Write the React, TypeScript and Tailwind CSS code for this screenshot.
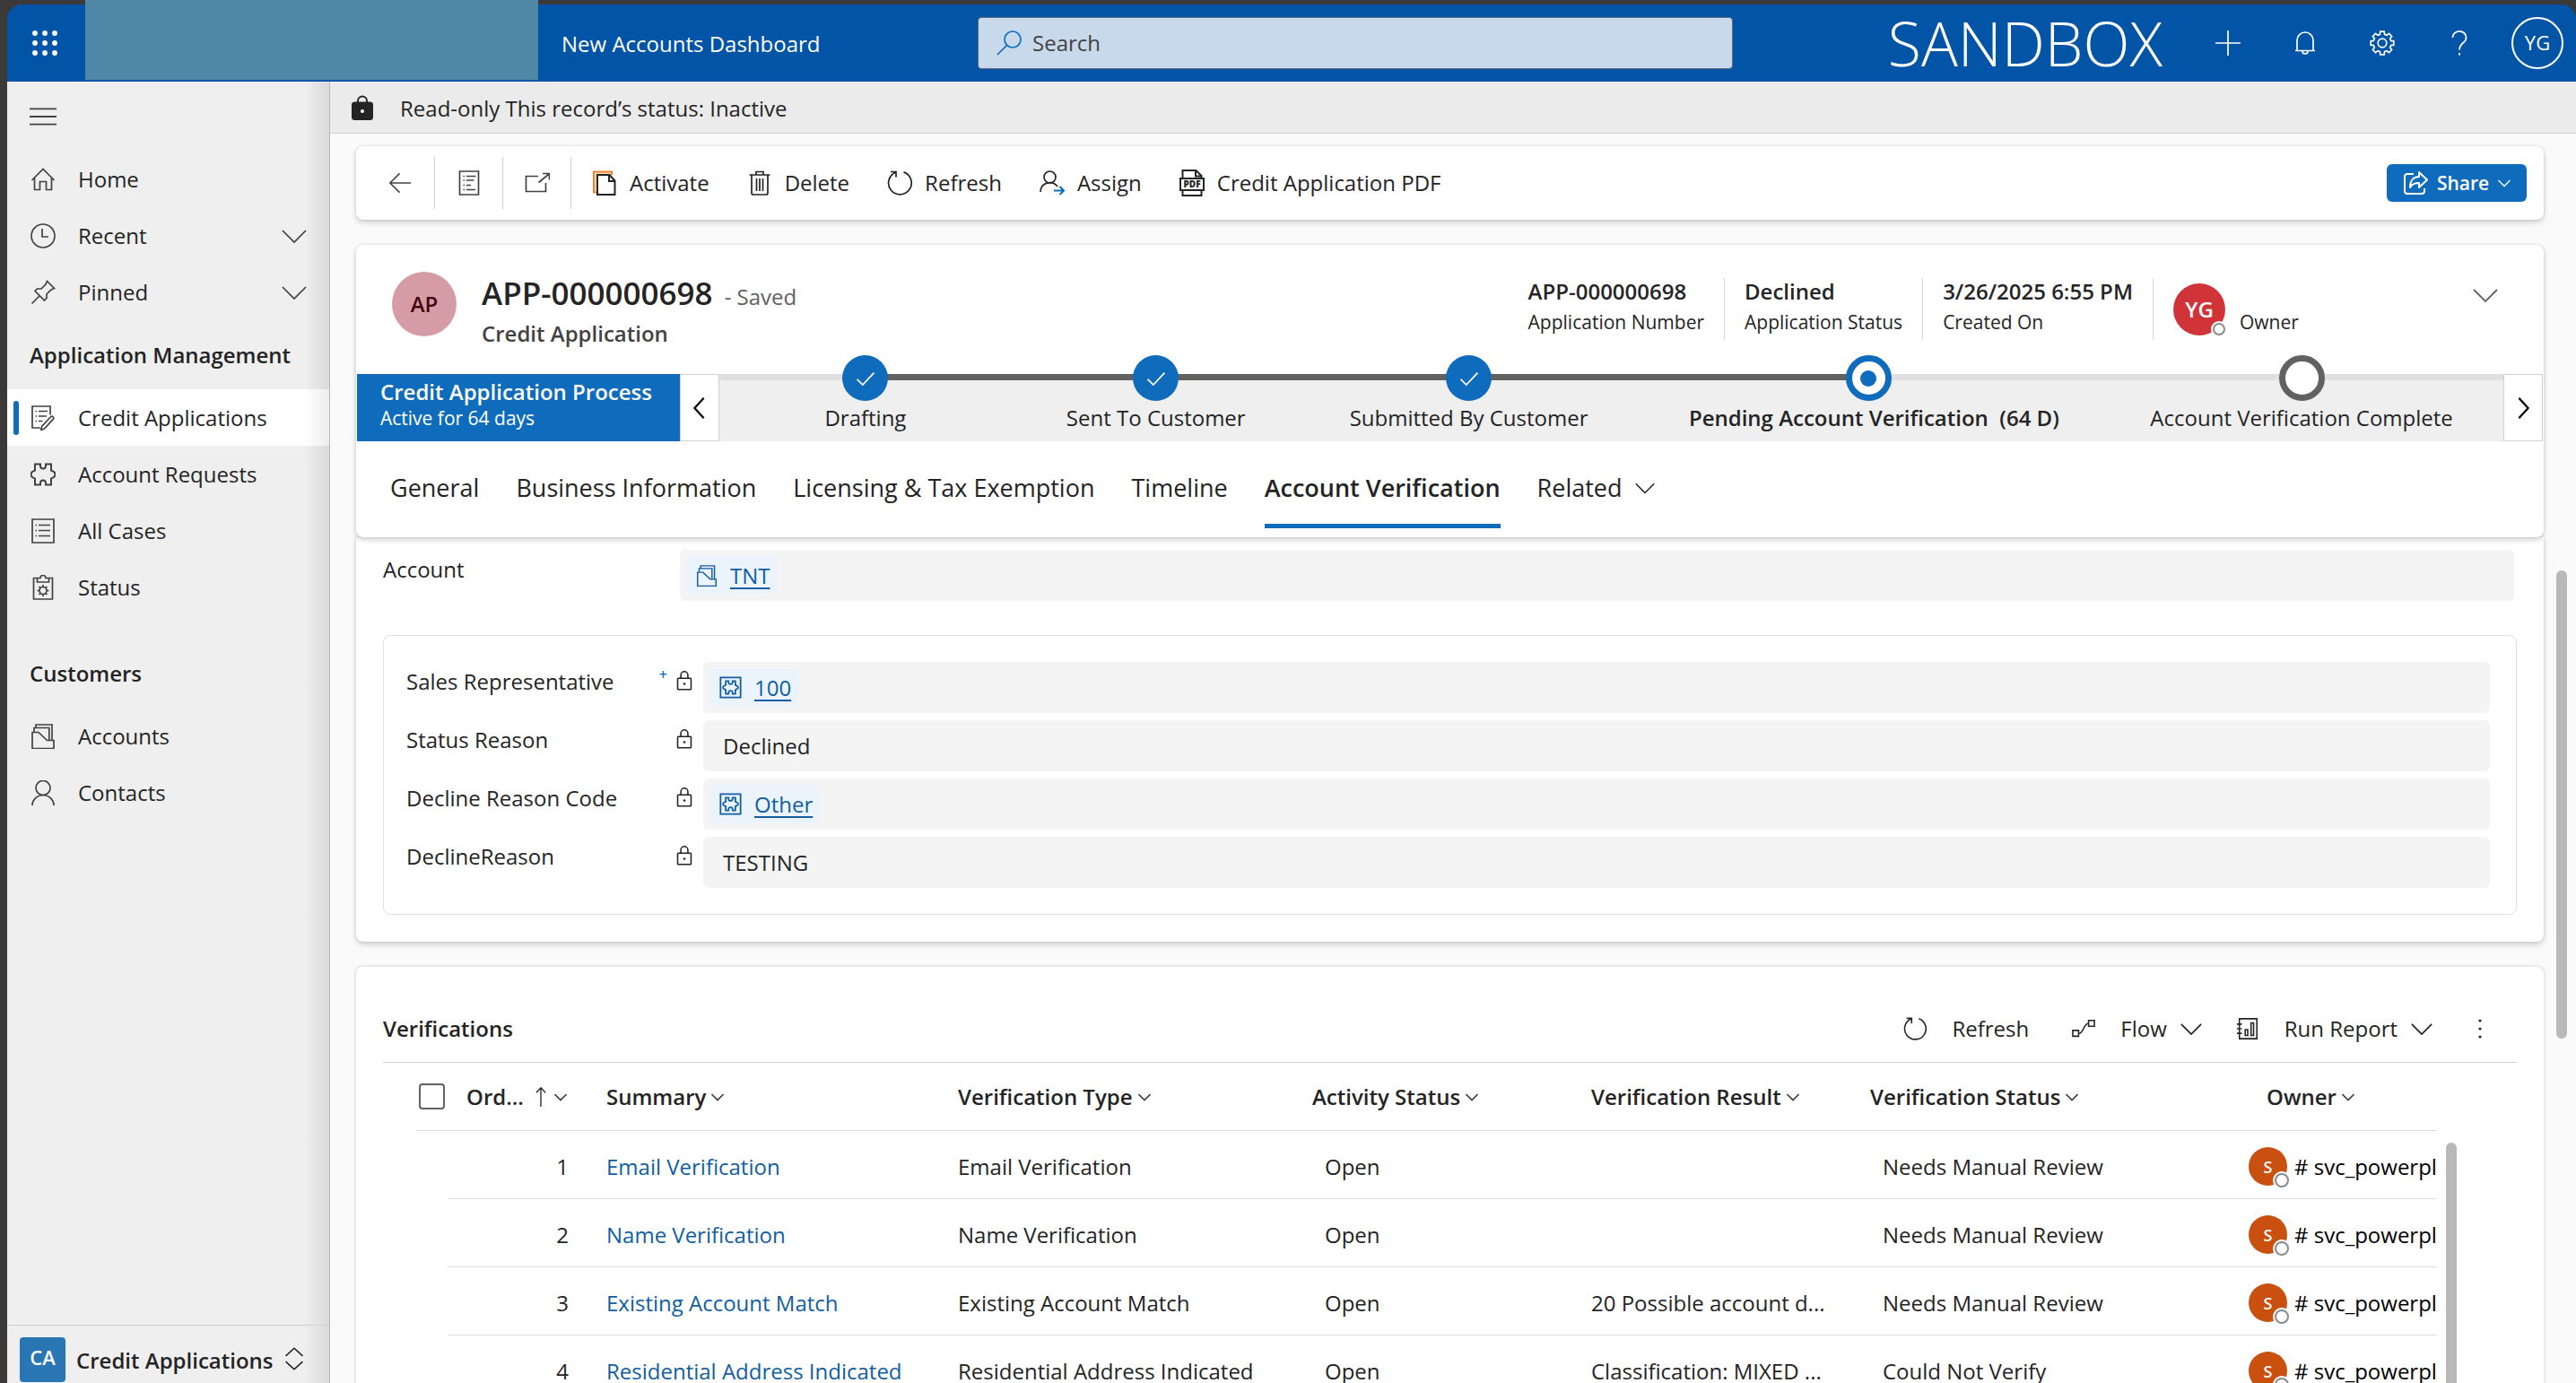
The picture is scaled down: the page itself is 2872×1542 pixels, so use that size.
import React, { useState } from 'react';
import { clsx } from 'clsx';

type IconProps = { className?: string };

function Svg({ className, children, stroke = 1.7 }: IconProps & { children: React.ReactNode; stroke?: number }) {
  return (
    <svg
      viewBox="0 0 28 28"
      fill="none"
      stroke="currentColor"
      strokeWidth={stroke}
      className={clsx('shrink-0', className ?? 'w-7 h-7')}
      aria-hidden="true"
    >
      {children}
    </svg>
  );
}

// outline of a cog with eight teeth
const gearPath = (cx: number, cy: number, outer: number, inner: number) => {
  const pts: string[] = [];
  for (let i = 0; i < 8; i++) {
    const a = (i * Math.PI) / 4;
    [
      [-0.26, inner],
      [-0.17, outer],
      [0.17, outer],
      [0.26, inner],
    ].forEach(([d, r]) => {
      pts.push(`${(cx + Math.sin(a + d) * r).toFixed(2)} ${(cy - Math.cos(a + d) * r).toFixed(2)}`);
    });
  }
  return `M${pts.join('L')}Z`;
};

const PUZZLE =
  'M5 2.5h6v2a3 3 0 0 0 6 0v-2h6v7c1 1 4.5.5 4.5 4.5s-3.5 3.5-4.5 4.5v7h-6v-2a3 3 0 0 0-6 0v2H5v-7c-1-1-4.5-.5-4.5-4.5S4 10.5 5 9.5z';

const HomeIcon = () => (
  <Svg>
    <path d="M1.5 15 14 2.5 26.5 15M4.5 12.5V25.5h6v-9h7v9h6v-13" />
  </Svg>
);
const ClockIcon = () => (
  <Svg>
    <circle cx="14" cy="14" r="13" />
    <path d="M13 6v9h7" />
  </Svg>
);
const PinIcon = () => (
  <Svg>
    <path d="M18.5 1.5 26.5 9.5 23 11l-5 5v4.5l-2.5 2.5L5 12.5 7.5 10H12l5-5zM10 18 1.5 26.5" />
  </Svg>
);
const ApplicationIcon = () => (
  <Svg>
    <path d="M22 10.5V1H2v24h9M5.500 6.500H7M9 6.500h10M5.500 12H7M9 12h9M5.500 17.500H7M9 17.500h4.500" />
    <path d="M22.500 12.800a1.800 1.800 0 0 1 2.700 2.600L15.500 26l-3.800 1.500 1-4z" />
  </Svg>
);
const PuzzleIcon = () => (
  <Svg stroke={2}>
    <path d={PUZZLE} />
  </Svg>
);
const ListIcon = () => (
  <Svg>
    <path d="M2 1h24v26H2zM5.500 7.500H7M9 7.500h13M5.500 13.500H7M9 13.500h13M5.500 19.500H7M9 19.500h13" />
  </Svg>
);
const StatusIcon = () => (
  <Svg>
    <path d="M7.500 3.500H3.500v23.500h21V3.500h-4M7.500 3.500v4.500h13V3.500h-3.500a3 3 0 0 0-6 0z" />
    <circle cx="14" cy="17.500" r="4" />
    <path d="M14 11v2.500M14 21.500v2.500M7.500 17.500H10M18 17.500h2.500M9.500 13l1.800 1.800M16.700 20.200l1.800 1.800M18.500 13l-1.800 1.800M11.300 20.200 9.500 22" />
  </Svg>
);
const AccountsIcon = ({ className }: IconProps) => (
  <Svg className={className}>
    <path d="M2 9.500h7l9.500 9h7.500V27.500H2zM6 4.500V1h18v17.500M4 9.500v-5h16.800v14" />
  </Svg>
);
const ContactIcon = () => (
  <Svg>
    <circle cx="14" cy="8.500" r="8" />
    <path d="M2 28a12 11.500 0 0 1 24 0" />
  </Svg>
);
const RefreshIcon = ({ className }: IconProps) => (
  <Svg className={className}>
    <path d="M18.500 1.900A12.800 12.800 0 1 1 9.500 2.200M4 1.500h6v6" />
  </Svg>
);
const ChevronDown = ({ className, stroke = 2 }: IconProps & { stroke?: number }) => (
  <Svg className={className} stroke={stroke}>
    <path d="M1 8l13 13L27 8" />
  </Svg>
);
const ChevronLeft = ({ className }: IconProps) => (
  <Svg className={className} stroke={2.4}>
    <path d="M19 2 8 14l11 12" />
  </Svg>
);
const LockIcon = () => (
  <Svg className="w-[22px] h-[22px]" stroke={2}>
    <rect x="4.500" y="10.500" width="19" height="16" rx="1" />
    <path d="M9 10.500V6a5 5 0 0 1 10 0v4.500" />
    <circle cx="14" cy="18.500" r="1.700" fill="currentColor" stroke="none" />
  </Svg>
);
const EntityIcon = () => (
  <Svg className="w-[25px] h-[25px]" stroke={2}>
    <path d="M1.500 1.500h25v25h-25z" />
    <path d="M8 6h3.500v1.500a2.500 2.500 0 0 0 5 0V6H20v5c1 .8 3.500.5 3.500 3s-2.500 2.200-3.500 3v5h-3.500v-1.500a2.500 2.500 0 0 0-5 0V22H8v-5c-1-.8-3.500-.5-3.500-3S7 11.800 8 11z" />
  </Svg>
);

const coreLinks = [
  { label: 'Home', icon: <HomeIcon /> },
  { label: 'Recent', icon: <ClockIcon />, expandable: true },
  { label: 'Pinned', icon: <PinIcon />, expandable: true },
];

const managementLinks = [
  { label: 'Credit Applications', icon: <ApplicationIcon /> },
  { label: 'Account Requests', icon: <PuzzleIcon /> },
  { label: 'All Cases', icon: <ListIcon /> },
  { label: 'Status', icon: <StatusIcon /> },
];

const customerLinks = [
  { label: 'Accounts', icon: <AccountsIcon /> },
  { label: 'Contacts', icon: <ContactIcon /> },
];

const stages = [
  { name: 'Drafting', state: 'done' },
  { name: 'Sent To Customer', state: 'done' },
  { name: 'Submitted By Customer', state: 'done' },
  { name: 'Pending Account Verification', state: 'active', age: '(64 D)' },
  { name: 'Account Verification Complete', state: 'todo' },
];

const tabs = ['General', 'Business Information', 'Licensing & Tax Exemption', 'Timeline', 'Account Verification'];

const columns = ['Summary', 'Verification Type', 'Activity Status', 'Verification Result', 'Verification Status', 'Owner'];

const verifications = [
  { order: 1, name: 'Email Verification', result: '', status: 'Needs Manual Review' },
  { order: 2, name: 'Name Verification', result: '', status: 'Needs Manual Review' },
  { order: 3, name: 'Existing Account Match', result: '20 Possible account d...', status: 'Needs Manual Review' },
  { order: 4, name: 'Residential Address Indicated', result: 'Classification: MIXED ...', status: 'Could Not Verify' },
];

function NavItem({ label, icon, expandable, selected }: { label: string; icon: React.ReactNode; expandable?: boolean; selected?: boolean }) {
  return (
    <a
      href="#"
      className={clsx(
        'relative flex h-[63px] items-center pl-[26px] pr-[25px] text-[#242424]',
        selected && 'bg-[linear-gradient(to_left,#ededed,#ffffff_28px)]'
      )}
      aria-current={selected ? 'page' : undefined}
    >
      {selected && <span className="absolute left-[7px] h-[38px] w-1.5 rounded-full bg-[#0f6cbd]" />}
      <span className="text-[#424242]">{icon}</span>
      <span className="ml-[25px] flex-1">{label}</span>
      {expandable && <ChevronDown className="h-7 w-7 text-[#424242]" stroke={1.7} />}
    </a>
  );
}

function Sidebar() {
  return (
    <nav className="flex w-[360px] shrink-0 flex-col border-r border-[#b8b8b8] bg-[linear-gradient(to_left,#dadada,#efefef_28px)]">
      <button aria-label="Site map" className="flex h-[77px] items-center pl-[25px] text-[#424242]">
        <Svg className="h-[30px] w-[30px]">
          <path d="M0 6h28M0 14h28M0 22h28" />
        </Svg>
      </button>
      {coreLinks.map((l) => (
        <NavItem key={l.label} {...l} />
      ))}
      <h2 className="flex h-[77px] items-center pl-[25px] font-semibold text-[#242424]">Application Management</h2>
      {managementLinks.map((l, i) => (
        <NavItem key={l.label} {...l} selected={i === 0} />
      ))}
      <h2 className="mt-[26px] flex h-[77px] items-center pl-[25px] font-semibold text-[#242424]">Customers</h2>
      {customerLinks.map((l) => (
        <NavItem key={l.label} {...l} />
      ))}
      <button className="mt-auto flex h-[65px] items-start border-t border-[#cfcfcf] pl-3.5 pt-[13px] text-left font-semibold text-[#242424]">
        <span className="flex h-[50px] w-[51px] items-center justify-center rounded bg-[#2a75b3] pb-1 text-[22px] text-white">CA</span>
        <span className="ml-3 pt-2.5">Credit Applications</span>
        <Svg className="ml-3 mt-2.5 h-7 w-[22px]" stroke={2}>
          <path d="M2 10 14-1l12 11M2 18l12 11 12-11" />
        </Svg>
      </button>
    </nav>
  );
}

function TopBar() {
  return (
    <header className="flex h-[86px] shrink-0 items-center rounded-t-2xl bg-[#0154a6] text-white">
      <button aria-label="App launcher" className="flex w-[87px] justify-center pr-1">
        <svg viewBox="0 0 28 28" className="h-7 w-7" fill="currentColor" aria-hidden="true">
          {[3, 14, 25].map((y) => [3, 14, 25].map((x) => <circle key={`${x}-${y}`} cx={x} cy={y} r="2.900" />))}
        </svg>
      </button>
      <div className="-mt-[7px] h-[91px] w-[505px] self-start bg-[#4f87a6]" />
      <span className="ml-[26px] w-[464px] pt-0.5">New Accounts Dashboard</span>
      <label className="flex h-[58px] w-[842px] items-center rounded border border-[#5f6a75] bg-[#c8d9eb] pl-5 text-[#0f6cbd]">
        <Svg>
          <circle cx="18" cy="10" r="9" />
          <path d="M11.500 16.500 1 27" />
        </Svg>
        <input
          type="text"
          aria-label="Search"
          placeholder="Search"
          className="ml-3 flex-1 bg-transparent text-[#424242] outline-none placeholder:text-[#424242]"
        />
      </label>
      <div className="ml-auto flex items-center pr-3.5">
        <span className="mr-[59px] text-[68px] font-light leading-[86px]">SANDBOX</span>
        <div className="flex items-center gap-[58px]">
          <button aria-label="New">
            <Svg>
              <path d="M14 0v28M0 14h28" />
            </Svg>
          </button>
          <button aria-label="Notifications">
            <Svg>
              <path d="M3 22.500h22M5 22.500V11a9 9 0 0 1 18 0v11.500M11 23a3 3 0 0 0 6 0" />
            </Svg>
          </button>
          <button aria-label="Settings">
            <Svg>
              <path d={gearPath(14, 14, 13, 10)} />
              <circle cx="14" cy="14" r="4.800" />
            </Svg>
          </button>
          <button aria-label="Help">
            <Svg>
              <path d="M6.500 8a7.500 7 0 1 1 12 5.500c-3 2.500-4.500 4-4.500 8" />
              <path d="M14 25v2.500" strokeWidth="2" />
            </Svg>
          </button>
          <button className="-ml-[14px] flex h-[58px] w-[58px] items-center justify-center rounded-full border-2 border-white text-[22px]">YG</button>
        </div>
      </div>
    </header>
  );
}

function CommandButton({ label, icon }: { label: string; icon: React.ReactNode }) {
  return (
    <button className="flex items-center gap-3.5 text-[#242424]">
      {icon}
      {label}
    </button>
  );
}

function CommandBar() {
  return (
    <div className="flex h-[82px] shrink-0 items-center rounded-lg bg-white pl-2.5 pr-[19px] shadow-[0_3px_6px_rgba(0,0,0,0.18),0_0_3px_rgba(0,0,0,0.12)]">
      <div className="flex items-center text-[#424242]">
        <button aria-label="Back" className="flex h-[58px] w-[78px] items-center justify-center border-r border-[#d1d1d1]">
          <Svg className="h-[26px] w-[26px]">
            <path d="M27 14H2M13.500 2.500 2 14l11.500 11.500" />
          </Svg>
        </button>
        <button aria-label="Show form" className="flex h-[58px] w-[76px] items-center justify-center border-r border-[#d1d1d1]">
          <Svg>
            <path d="M3.500 1h21v26h-21zM7.500 6.500H9M11 6.500h10.500M7.500 11H9M11 11h8.500M7.500 16.500H9M11 16.500h5M7.500 21.500H9M11 21.500h10" />
          </Svg>
        </button>
        <button aria-label="Open in new window" className="flex h-[58px] w-[76px] items-center justify-center border-r border-[#d1d1d1]">
          <Svg>
            <path d="M15 6.500H1.500v17h22V14M15.500 13.500 27 4M20 3.500h7.500v7" />
          </Svg>
        </button>
      </div>
      <div className="ml-[23px] flex items-center gap-[42px]">
        <CommandButton
          label="Activate"
          icon={
            <Svg stroke={2}>
              <path d="M5.500 24.500H2V1.500h20V5" stroke="#e8833a" fill="#f9d9a8" />
              <path d="M6 5h13.500l6 6.500V27H6z" fill="#fff" />
              <path d="M19 5v7h6.500" />
            </Svg>
          }
        />
        <CommandButton
          label="Delete"
          icon={
            <Svg>
              <path d="M2.500 5h23M10 5V1.500h8V5M5 5v20a2 2 0 0 0 2 2h14a2 2 0 0 0 2-2V5M10.500 9v14M14 9v14M17.500 9v14" />
            </Svg>
          }
        />
        <CommandButton label="Refresh" icon={<RefreshIcon />} />
        <CommandButton
          label="Assign"
          icon={
            <Svg>
              <circle cx="11.500" cy="7.500" r="6.500" />
              <path d="M1 24a10.500 10.500 0 0 1 19-6" />
              <path d="M16 22.500h11M22.500 18l4.500 4.500-4.500 4.500" stroke="#0f6cbd" strokeWidth="2" />
            </Svg>
          }
        />
        <CommandButton
          label="Credit Application PDF"
          icon={
            <svg viewBox="0 0 28 30" className="h-[30px] w-7 shrink-0" fill="none" stroke="#242424" strokeWidth="2" aria-hidden="true">
              <path d="M3.500 10V1h15l6 6v3M18 1v6.500h6.500M1 10h26v13H1zM3.500 23v6h21v-6" />
              <text x="14" y="20" textAnchor="middle" fontSize="10" fontWeight="800" fill="#242424" stroke="none">
                PDF
              </text>
            </svg>
          }
        />
      </div>
      <button className="ml-auto flex h-[42px] w-[156px] items-center justify-center rounded-md bg-[#0f6cbd] text-[21px] font-semibold text-white">
        <Svg stroke={2}>
          <path d="M12 4H5a3 3 0 0 0-3 3v16a3 3 0 0 0 3 3h16a3 3 0 0 0 3-3v-3" />
          <path d="M18 2l9 8.500-9 8.500v-5c-5 0-8 1.500-10 5 0-7 3.500-12 10-12z" strokeLinejoin="round" />
        </Svg>
        <span className="ml-2.5">Share</span>
        <ChevronDown className="ml-2.5 h-3.5 w-3.5" stroke={2.5} />
      </button>
    </div>
  );
}

function Presence({ className }: IconProps) {
  return <span className={clsx('absolute rounded-full border-2 border-[#8a8a8a] bg-white ring-2 ring-white', className)} />;
}

function Stat({ value, label }: { value: string; label: string }) {
  return (
    <div className="flex h-[69px] flex-col gap-1 border-r border-[#d6d6d6] px-[22px] text-[#242424]">
      <span className="font-semibold leading-[30px]">{value}</span>
      <span className="text-[21px] leading-[30px]">{label}</span>
    </div>
  );
}

function ProcessFlow() {
  return (
    <div className="flex h-[75px] px-px">
      <button className="w-[360px] shrink-0 bg-[#0f6cbd] pb-2 pl-[26px] text-left text-white">
        <span className="block font-semibold leading-[30px]">Credit Application Process</span>
        <span className="block text-[21px] leading-7">Active for 64 days</span>
      </button>
      <button aria-label="Previous stage" className="flex w-11 shrink-0 items-center justify-center border border-[#d1d1d1] bg-white">
        <ChevronLeft className="h-[26px] w-[26px]" />
      </button>
      <ol className="grid flex-1 grid-cols-[326fr_322fr_376fr_516fr_450fr] bg-[#efefef] text-[#242424]">
        {stages.map((s, i) => (
          <li key={s.name} className="flex flex-col items-center">
            <div className="flex h-[7px] w-full">
              <div className={clsx('flex-1', i > 0 && s.state !== 'todo' ? 'bg-[#616161]' : 'bg-[#e0e0e0]')} />
              <div className={clsx('flex-1', s.state === 'done' ? 'bg-[#616161]' : 'bg-[#e0e0e0]')} />
            </div>
            <button className="-mt-7 flex flex-col items-center whitespace-pre">
              {s.state === 'done' && (
                <span className="flex h-[51px] w-[51px] items-center justify-center rounded-full bg-[#0f6cbd] text-white">
                  <Svg className="h-[22px] w-[22px]" stroke={2.2}>
                    <path d="M2 15l8 8L26 6" />
                  </Svg>
                </span>
              )}
              {s.state === 'active' && (
                <span className="flex h-[51px] w-[51px] items-center justify-center rounded-full border-[7px] border-[#0f6cbd] bg-white">
                  <span className="h-[18px] w-[18px] rounded-full bg-[#0f6cbd]" />
                </span>
              )}
              {s.state === 'todo' && <span className="h-[51px] w-[51px] rounded-full border-[7px] border-[#616161] bg-white" />}
              <span className={clsx('leading-[38px]', s.state === 'active' && 'pl-3 font-semibold')}>
                {s.name}
                {s.age && `  ${s.age}`}
              </span>
            </button>
          </li>
        ))}
      </ol>
      <button aria-label="Next stage" className="flex w-11 shrink-0 items-center justify-center border border-[#d1d1d1] bg-white">
        <ChevronLeft className="h-[26px] w-[26px] rotate-180" />
      </button>
    </div>
  );
}

function RecordHeader() {
  const [active, setActive] = useState('Account Verification');
  return (
    <section className="relative shrink-0 rounded-lg bg-white shadow-[0_3px_6px_rgba(0,0,0,0.18),0_0_3px_rgba(0,0,0,0.12)]">
      <div className="flex h-36 items-start pt-[30px]">
        <span className="ml-10 flex h-[72px] w-[72px] items-center justify-center rounded-full bg-[#d69ca5] font-semibold text-[#420610]">AP</span>
        <div className="ml-7">
          <h1 className="text-[35px] font-semibold leading-[48px] text-[#242424]">
            APP-000000698 <span className="ml-1 text-2xl font-normal text-[#616161]">- Saved</span>
          </h1>
          <p className="font-semibold leading-[42px] text-[#424242]">Credit Application</p>
        </div>
        <div className="ml-auto flex items-center pt-[7px]">
          <Stat value="APP-000000698" label="Application Number" />
          <Stat value="Declined" label="Application Status" />
          <Stat value="3/26/2025 6:55 PM" label="Created On" />
          <span className="relative ml-[22px] flex h-[58px] w-[58px] items-center justify-center rounded-full bg-[#d13438] font-semibold text-white">
            YG
            <Presence className="bottom-0 right-0 h-3.5 w-3.5" />
          </span>
          <span className="ml-4 mt-7 w-[260px] text-[21px] text-[#242424]">Owner</span>
          <button aria-label="Expand header" className="mb-8 mr-[51px] text-[#616161]">
            <ChevronDown className="h-7 w-7" stroke={1.8} />
          </button>
        </div>
      </div>
      <ProcessFlow />
      <div role="tablist" className="flex h-[107px] items-start gap-[41px] pl-[38px] pt-6 text-[27px] text-[#242424]">
        {tabs.map((t) => (
          <button
            key={t}
            role="tab"
            aria-selected={active === t}
            onClick={() => setActive(t)}
            className={clsx('h-[73px] border-b-[5px] pb-3', active === t ? 'border-[#0f6cbd] font-semibold' : 'border-transparent')}
          >
            {t}
          </button>
        ))}
        <button className="flex h-[73px] items-center gap-3.5 pb-[17px]">
          Related
          <ChevronDown className="h-[22px] w-[22px]" />
        </button>
      </div>
    </section>
  );
}

function LookupField({ text, icon }: { text: string; icon: React.ReactNode }) {
  return (
    <div className="flex h-[57px] flex-1 items-center rounded-md bg-[#f4f4f4] pl-[7px]">
      <a href="#" className="flex h-[43px] items-center gap-3.5 rounded-md bg-[#ebf3fc] pl-[11px] pr-2 text-[#115ea3]">
        {icon}
        <span className="underline decoration-2 underline-offset-4">{text}</span>
      </a>
    </div>
  );
}

function FormRow({ id, label, recommended, children }: { id: string; label: string; recommended?: boolean; children: React.ReactNode }) {
  return (
    <div className="flex text-[#242424]">
      <div className="flex w-[331px] shrink-0 items-start pr-2.5">
        <label htmlFor={id} className="flex-1 pt-1.5 leading-8">
          {label}
        </label>
        {recommended && <span className="pr-2 pt-0.5 text-base font-semibold leading-6 text-[#0f6cbd]">+</span>}
        <span className="pt-2.5">
          <LockIcon />
        </span>
      </div>
      {children}
    </div>
  );
}

function FormBody() {
  return (
    <section className="shrink-0 rounded-b-lg bg-white px-[30px] pb-[30px] pt-3.5 shadow-[0_3px_6px_rgba(0,0,0,0.18),0_0_3px_rgba(0,0,0,0.12)]">
      <div className="flex pr-[3px] text-[#242424]">
        <span className="w-[331px] shrink-0 pt-1.5 leading-8">Account</span>
        <LookupField text="TNT" icon={<AccountsIcon className="h-6 w-6" />} />
      </div>
      <div className="mt-[38px] flex flex-col gap-2 rounded-lg border border-[#e0e0e0] py-[29px] pl-[25px] pr-[29px]">
        <FormRow id="rep" label="Sales Representative" recommended>
          <LookupField text="100" icon={<EntityIcon />} />
        </FormRow>
        <FormRow id="status" label="Status Reason">
          <input id="status" readOnly value="Declined" className="h-[57px] flex-1 rounded-md bg-[#f4f4f4] pl-[22px] outline-none" />
        </FormRow>
        <FormRow id="code" label="Decline Reason Code">
          <LookupField text="Other" icon={<EntityIcon />} />
        </FormRow>
        <FormRow id="reason" label="DeclineReason">
          <input id="reason" readOnly value="TESTING" className="h-[57px] flex-1 rounded-md bg-[#f4f4f4] pl-[22px] outline-none" />
        </FormRow>
      </div>
    </section>
  );
}

function VerificationsGrid() {
  return (
    <section className="mt-7 flex-1 rounded-t-lg bg-white px-[30px] text-[#242424] shadow-[0_0_4px_rgba(0,0,0,0.2)]">
      <div className="flex h-[107px] items-center border-b border-[#d1d1d1] pt-8">
        <h2 className="font-semibold">Verifications</h2>
        <div className="ml-auto flex items-center">
          <button className="flex items-center gap-7">
            <RefreshIcon className="h-[26px] w-[26px]" />
            Refresh
          </button>
          <button className="ml-12 flex items-center">
            <Svg className="h-[26px] w-[26px]">
              <path d="M1 16h7v7H1zM20 4h7v7h-7zM8 20c6 0 6-12.500 12-12.500" />
            </Svg>
            <span className="ml-7">Flow</span>
            <ChevronDown className="ml-[15px] h-6 w-6" />
          </button>
          <button className="ml-[38px] flex items-center">
            <Svg className="h-[26px] w-[26px]">
              <path d="M4 2h21v24H4zM1 8.500h6M1 14h6M1 19.500h6M11 15h3v7h-3zM18 7h3v15h-3z" />
            </Svg>
            <span className="ml-7">Run Report</span>
            <ChevronDown className="ml-[15px] h-6 w-6" />
          </button>
          <button aria-label="More commands" className="ml-[50px] mr-[38px]">
            <svg viewBox="0 0 6 24" className="h-6 w-1.5" fill="currentColor" aria-hidden="true">
              <circle cx="3" cy="3" r="1.600" />
              <circle cx="3" cy="12" r="1.600" />
              <circle cx="3" cy="21" r="1.600" />
            </svg>
          </button>
        </div>
      </div>
      <div className="flex pl-9 pr-[89px]">
        <table className="w-full table-fixed border-separate border-spacing-0 text-left">
          <colgroup>
            <col className="w-9" />
            <col className="w-[155px]" />
            <col className="w-[392px]" />
            <col className="w-[395px]" />
            <col className="w-[311px]" />
            <col className="w-[311px]" />
            <col className="w-[442px]" />
            <col />
          </colgroup>
          <thead>
            <tr className="h-[76px] [&>th]:border-b [&>th]:border-[#e0e0e0] [&>th]:p-0 [&>th]:font-semibold">
              <th>
                <input
                  type="checkbox"
                  aria-label="Select all rows"
                  className="ml-1 block h-[29px] w-[29px] appearance-none rounded border-2 border-[#616161] bg-white"
                />
              </th>
              <th>
                <button className="flex items-center pl-[21px]">
                  Ord...
                  <Svg className="ml-2 h-[22px] w-[22px]">
                    <path d="M14 28V1M7.500 8 14 1l6.500 7" />
                  </Svg>
                  <ChevronDown className="ml-1 h-3.5 w-3.5 text-[#424242]" stroke={3.5} />
                </button>
              </th>
              {columns.map((c) => (
                <th key={c}>
                  <button className="flex items-center gap-1.5 pl-[22px]">
                    {c}
                    <ChevronDown className="h-3.5 w-3.5 text-[#424242]" stroke={3.5} />
                  </button>
                </th>
              ))}
            </tr>
          </thead>
          <tbody>
            {verifications.map((v) => (
              <tr
                key={v.order}
                className="h-[76px] whitespace-nowrap [&>td]:border-b [&>td]:border-[#e0e0e0] [&>td]:p-0 [&>td]:pl-[22px] [&>td]:pt-1 [&>td:first-child]:border-0"
              >
                <td />
                <td>
                  <span className="block pr-5 text-right">{v.order}</span>
                </td>
                <td>
                  <a href="#" className="text-[#115ea3]">
                    {v.name}
                  </a>
                </td>
                <td>{v.name}</td>
                <td>
                  <span className="pl-3.5">Open</span>
                </td>
                <td>{v.result}</td>
                <td>
                  <span className="pl-3.5">{v.status}</span>
                </td>
                <td>
                  <span className="-ml-5 flex items-center text-black">
                    <span className="relative flex h-[43px] w-[43px] shrink-0 items-center justify-center rounded-full bg-[#ca5010] text-lg font-semibold text-white">
                      S
                      <Presence className="-bottom-0.5 -right-0.5 h-4 w-4" />
                    </span>
                    <span className="ml-2"># svc_powerpl</span>
                  </span>
                </td>
              </tr>
            ))}
          </tbody>
        </table>
        <div className="-mr-[22px] ml-2.5 mt-[89px] w-3 shrink-0 rounded-full bg-[#b9b9b9]" />
      </div>
    </section>
  );
}

export default function App() {
  return (
    <div className="flex h-screen flex-col overflow-hidden bg-[#3b3a39] pl-2 pt-[5px] font-['Open_Sans','Noto_Sans',sans-serif] text-2xl">
      <TopBar />
      <div className="flex min-h-0 flex-1 bg-[#fafafa]">
        <Sidebar />
        <main className="flex min-w-0 flex-1 flex-col">
          <div className="flex h-[58px] shrink-0 items-center border-b border-[#cfcfcf] bg-[#ebebeb] pl-6 text-[#242424]">
            <svg viewBox="0 0 24 28" className="h-7 w-6" aria-hidden="true">
              <path d="M7 9V6.500a5 5 0 0 1 10 0V9" fill="none" stroke="#242424" strokeWidth="2" />
              <rect x="0" y="7.500" width="24" height="20.500" rx="3.500" fill="#242424" />
              <circle cx="12" cy="18" r="2" fill="#fff" />
            </svg>
            <span className="ml-[30px] pt-0.5">Read-only This record’s status: Inactive</span>
          </div>
          <div className="flex min-h-0 flex-1">
            <div className="flex min-w-0 flex-1 flex-col overflow-hidden pl-[29px] pr-3.5 pt-3.5">
              <CommandBar />
              <div className="mt-7 flex flex-1 flex-col">
                <RecordHeader />
                <FormBody />
                <VerificationsGrid />
              </div>
            </div>
            <div className="mr-2.5 mt-[487px] h-[522px] w-3 rounded-full bg-[#b9b9b9]" />
          </div>
        </main>
      </div>
    </div>
  );
}
